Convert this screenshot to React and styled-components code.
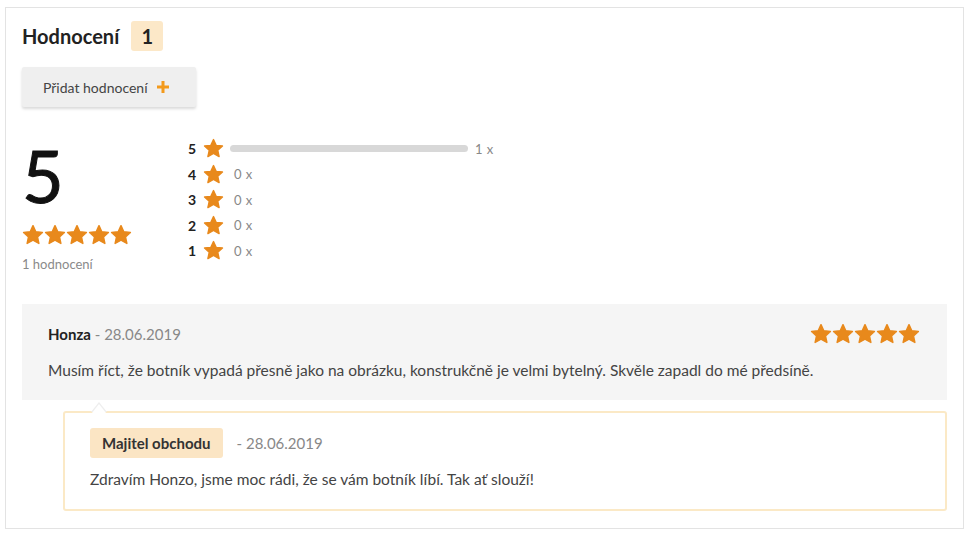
import React from "react";
import styled, { createGlobalStyle } from "styled-components";

const Global = createGlobalStyle`
  html, body { margin: 0; padding: 0; background: #fff; }
  body { font-family: Lato, "Noto Sans", sans-serif; color: #333; }
  * { box-sizing: border-box; }
`;

const Page = styled.div`
  padding: 7px 5px 0 5px;
`;

const Panel = styled.section`
  width: 959px;
  height: 522px;
  border: 1px solid #e3e3e3;
  padding: 13px 16px 16px 16px;
`;

const TitleRow = styled.div`
  display: flex;
  align-items: center;
  gap: 12px;
`;

const Title = styled.h2`
  margin: 0;
  font-size: 20px;
  font-weight: 700;
  color: #222;
`;

const CountBadge = styled.span`
  display: inline-flex;
  align-items: center;
  justify-content: center;
  width: 32px;
  height: 30px;
  border-radius: 3px;
  background: #fce8c8;
  font-size: 20px;
  font-weight: 700;
  color: #222;
`;

const AddButton = styled.button`
  margin-top: 16px;
  display: flex;
  align-items: center;
  gap: 8px;
  height: 40px;
  width: 174px;
  padding: 0 0 0 21px;
  border: none;
  border-radius: 2px;
  background: #efefef;
  box-shadow: 0 2px 3px rgba(0, 0, 0, 0.15);
  font-family: inherit;
  font-size: 14px;
  color: #444;
`;

const Summary = styled.div`
  display: flex;
  margin-top: 33px;
  height: 164px;
`;

const Score = styled.div`
  display: flex;
  flex-direction: column;
  width: 166px;
`;

const BigNumber = styled.div`
  font-size: 72px;
  line-height: 70px;
  height: 80px;
  font-weight: 400;
  color: #111;
  -webkit-text-stroke: 1px #111;
`;

const Stars = styled.div`
  display: flex;
  gap: 0;
  margin-top: ${(p) => p.$mt || 0}px;
`;

const CountText = styled.div`
  margin-top: 10px;
  font-size: 13px;
  color: #8a8a8a;
`;

const Distribution = styled.div`
  display: flex;
  flex-direction: column;
  margin-top: -4px;
`;

const DistRow = styled.div`
  display: flex;
  align-items: center;
  height: 25.5px;
`;

const DistNum = styled.span`
  width: 15px;
  font-size: 14px;
  font-weight: 700;
  color: #222;
`;

const Bar = styled.div`
  width: 238px;
  height: 7px;
  border-radius: 4px;
  background: #d8d8d8;
  margin-left: 6px;
`;

const DistCount = styled.span`
  margin-left: ${(p) => p.$ml}px;
  font-size: 13px;
  color: #888;
  letter-spacing: 0.5px;
`;

const Review = styled.div`
  background: #f5f5f5;
  height: 96px;
  padding: 19px 27px 0 26px;
`;

const ReviewHead = styled.div`
  display: flex;
  align-items: center;
  justify-content: space-between;
`;

const Author = styled.div`
  font-size: 15px;
  color: #888;
`;

const Name = styled.strong`
  color: #222;
  font-weight: 700;
`;

const ReviewText = styled.p`
  margin: 16px 0 0 0;
  font-size: 15.5px;
  color: #444;
`;

const Reply = styled.div`
  position: relative;
  margin: 11px 0 0 41px;
  height: 100px;
  border: 2px solid #fbe9c6;
  border-radius: 3px;
  padding: 15px 25px 0 25px;
  &::before {
    content: "";
    position: absolute;
    top: -11px;
    left: 26px;
    width: 0;
    height: 0;
    border-left: 8px solid transparent;
    border-right: 8px solid transparent;
    border-bottom: 10px solid #eee;
  }
  &::after {
    content: "";
    position: absolute;
    top: -9px;
    left: 27px;
    width: 0;
    height: 0;
    border-left: 7px solid transparent;
    border-right: 7px solid transparent;
    border-bottom: 9px solid #fff;
  }
`;

const ReplyHead = styled.div`
  display: flex;
  align-items: center;
  gap: 14px;
`;

const OwnerBadge = styled.span`
  display: inline-flex;
  align-items: center;
  height: 30px;
  padding: 0 12px;
  border-radius: 3px;
  background: #fbe5c4;
  font-size: 15px;
  font-weight: 700;
  color: #333;
`;

const ReplyDate = styled.span`
  font-size: 15px;
  color: #888;
`;

const ReplyText = styled.p`
  margin: 12px 0 0 0;
  font-size: 15.5px;
  color: #444;
`;

const STAR_PATH =
  "M12 1.8l3.05 6.6 7.2.8-5.35 4.9 1.5 7.1L12 17.6l-6.4 3.6 1.5-7.1L1.75 9.2l7.2-.8z";

const Star = ({ size = 22 }) => (
  <svg width={size} height={size} viewBox="0 0 24 24" aria-hidden="true">
    <path d={STAR_PATH} fill="#e8891c" stroke="#e8891c" strokeWidth="1.6" strokeLinejoin="round" />
  </svg>
);

const FiveStars = ({ size, mt }) => (
  <Stars $mt={mt}>
    {[0, 1, 2, 3, 4].map((i) => (
      <Star key={i} size={size} />
    ))}
  </Stars>
);

const Plus = () => (
  <svg width="14" height="14" viewBox="0 0 14 14" aria-hidden="true">
    <path d="M7 1v12M1 7h12" stroke="#f39a1c" strokeWidth="3" />
  </svg>
);

const dist = [
  { n: 5, c: 1 },
  { n: 4, c: 0 },
  { n: 3, c: 0 },
  { n: 2, c: 0 },
  { n: 1, c: 0 },
];

export default function App() {
  return (
    <>
      <Global />
      <Page>
        <Panel>
          <TitleRow>
            <Title>Hodnocení</Title>
            <CountBadge>1</CountBadge>
          </TitleRow>
          <AddButton>
            Přidat hodnocení <Plus />
          </AddButton>
          <Summary>
            <Score>
              <BigNumber>5</BigNumber>
              <FiveStars size={22} mt={4} />
              <CountText>1 hodnocení</CountText>
            </Score>
            <Distribution>
              {dist.map((d) => (
                <DistRow key={d.n}>
                  <DistNum>{d.n}</DistNum>
                  <Star size={21} />
                  {d.c > 0 && <Bar />}
                  <DistCount $ml={d.c > 0 ? 7 : 10}>{d.c} x</DistCount>
                </DistRow>
              ))}
            </Distribution>
          </Summary>
          <Review>
            <ReviewHead>
              <Author>
                <Name>Honza</Name> - 28.06.2019
              </Author>
              <FiveStars size={22} />
            </ReviewHead>
            <ReviewText>
              Musím říct, že botník vypadá přesně jako na obrázku, konstrukčně je velmi bytelný. Skvěle zapadl do mé předsíně.
            </ReviewText>
          </Review>
          <Reply>
            <ReplyHead>
              <OwnerBadge>Majitel obchodu</OwnerBadge>
              <ReplyDate>- 28.06.2019</ReplyDate>
            </ReplyHead>
            <ReplyText>Zdravím Honzo, jsme moc rádi, že se vám botník líbí. Tak ať slouží!</ReplyText>
          </Reply>
        </Panel>
      </Page>
    </>
  );
}
